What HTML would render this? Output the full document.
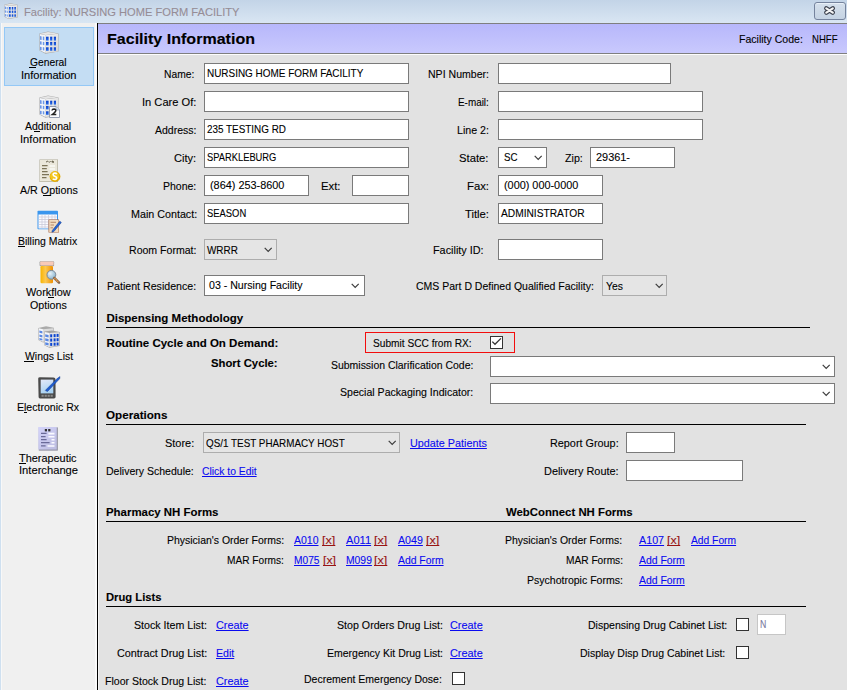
<!DOCTYPE html><html><head><meta charset="utf-8"><style>
html,body{margin:0;padding:0;}
body{width:847px;height:690px;overflow:hidden;position:relative;background:#e2e2e2;font-family:"Liberation Sans",sans-serif;}
body div,body span,body svg{position:absolute;}
.t{white-space:nowrap;transform-origin:0 0;text-decoration-skip-ink:none;-webkit-text-stroke:0.1px currentColor;}
</style></head><body>

<div style="left:0px;top:0px;width:847px;height:23px;background:linear-gradient(#c3d4e7,#d9e6f3)"></div>
<svg style="left:4px;top:3px" width="14.0" height="16.099999999999998" viewBox="0 0 20 23">
<defs><linearGradient id="bw" x1="0" y1="0" x2="0" y2="1"><stop offset="0" stop-color="#0a3ec8"/><stop offset="1" stop-color="#2a6ee8"/></linearGradient>
<linearGradient id="bf" x1="0" y1="0" x2="1" y2="1"><stop offset="0" stop-color="#f6f6f6"/><stop offset="1" stop-color="#d4d4d4"/></linearGradient></defs>
<path d="M0.4 2.6 L9 0.4 L19.5 2.4 L19.5 20.6 L6.5 22.7 L0.4 19.6 Z" fill="#a8a8a8"/>
<path d="M0.9 3 L6.5 4.2 L6.5 22 L0.9 19.3 Z" fill="#f4f6fa"/>
<path d="M6.5 4.2 L19 2.8 L19 20.4 L6.5 22 Z" fill="url(#bf)"/>
<path d="M1 2.7 L9 0.9 L18.8 2.6 L6.5 3.9 Z" fill="#e6e6e6"/>
<path d="M1.2 5.1000000000000005 L2.5 5.4 L2.5 9.0 L1.2 8.7 Z" fill="#4a7ee0"/><path d="M3.8 5.5 L5.3 5.8 L5.3 9.4 L3.8 9.1 Z" fill="#6a98e8"/><path d="M1.2 10.3 L2.5 10.6 L2.5 13.8 L1.2 13.5 Z" fill="#4a7ee0"/><path d="M3.8 10.700000000000001 L5.3 11.0 L5.3 14.200000000000001 L3.8 13.9 Z" fill="#6a98e8"/><path d="M1.2 15.700000000000001 L2.5 16.0 L2.5 19.2 L1.2 18.900000000000002 Z" fill="#4a7ee0"/><path d="M3.8 16.1 L5.3 16.400000000000002 L5.3 19.6 L3.8 19.3 Z" fill="#6a98e8"/><rect x="7" y="5.7" width="2.6" height="3.9" fill="url(#bw)"/><rect x="11.1" y="5.7" width="2.2" height="3.9" fill="url(#bw)"/><rect x="14.8" y="5.7" width="2.2" height="3.9" fill="url(#bw)"/><rect x="7" y="10.9" width="2.6" height="3.5" fill="url(#bw)"/><rect x="11.1" y="10.9" width="2.2" height="3.5" fill="url(#bw)"/><rect x="14.8" y="10.9" width="2.2" height="3.5" fill="url(#bw)"/><rect x="7" y="16.3" width="2.6" height="3.5" fill="url(#bw)"/><rect x="11.1" y="16.3" width="2.2" height="3.5" fill="url(#bw)"/><rect x="14.8" y="16.3" width="2.2" height="3.5" fill="url(#bw)"/>
</svg>
<span class="t" style="left:23.5px;top:2px;font-size:11.5px;line-height:20px;color:#968d96;transform:scaleX(0.9664);">Facility: NURSING HOME FORM FACILITY</span>
<div style="left:814px;top:2px;width:30px;height:16px;border:1px solid #75839d;border-radius:3px;background:linear-gradient(#d5e0ec,#c5d3e3);box-shadow:inset 0 1px 0 #e8f0f8"></div>
<svg style="left:818px;top:2px" width="24" height="18" viewBox="0 0 24 18">
<path d="M8.3 6.3 L14.8 10.6 M14.8 6.3 L8.3 10.6" stroke="#3a3f4c" stroke-width="4.4" stroke-linecap="round"/>
<path d="M8.3 6.3 L14.8 10.6 M14.8 6.3 L8.3 10.6" stroke="#f4f4f4" stroke-width="2.2" stroke-linecap="round"/>
</svg>
<div style="left:0px;top:23px;width:97px;height:667px;background:#f0f0f0"></div>
<div style="left:0px;top:23px;width:1px;height:667px;background:#cfe0f0"></div>
<div style="left:1px;top:23px;width:1px;height:667px;background:#f8f8f8"></div>
<div style="left:95px;top:23px;width:2px;height:667px;background:#fafafa"></div>
<div style="left:97px;top:23px;width:1px;height:667px;background:#000"></div>
<div style="left:98px;top:55px;width:1px;height:635px;background:#f4f4f4"></div>
<div style="left:4px;top:27px;width:88px;height:57px;border:1px solid #94c8f6;background:#c4ddf3"></div>
<svg style="left:39px;top:31px" width="20.0" height="23.0" viewBox="0 0 20 23">
<defs><linearGradient id="bw" x1="0" y1="0" x2="0" y2="1"><stop offset="0" stop-color="#0a3ec8"/><stop offset="1" stop-color="#2a6ee8"/></linearGradient>
<linearGradient id="bf" x1="0" y1="0" x2="1" y2="1"><stop offset="0" stop-color="#f6f6f6"/><stop offset="1" stop-color="#d4d4d4"/></linearGradient></defs>
<path d="M0.4 2.6 L9 0.4 L19.5 2.4 L19.5 20.6 L6.5 22.7 L0.4 19.6 Z" fill="#a8a8a8"/>
<path d="M0.9 3 L6.5 4.2 L6.5 22 L0.9 19.3 Z" fill="#f4f6fa"/>
<path d="M6.5 4.2 L19 2.8 L19 20.4 L6.5 22 Z" fill="url(#bf)"/>
<path d="M1 2.7 L9 0.9 L18.8 2.6 L6.5 3.9 Z" fill="#e6e6e6"/>
<path d="M1.2 5.1000000000000005 L2.5 5.4 L2.5 9.0 L1.2 8.7 Z" fill="#4a7ee0"/><path d="M3.8 5.5 L5.3 5.8 L5.3 9.4 L3.8 9.1 Z" fill="#6a98e8"/><path d="M1.2 10.3 L2.5 10.6 L2.5 13.8 L1.2 13.5 Z" fill="#4a7ee0"/><path d="M3.8 10.700000000000001 L5.3 11.0 L5.3 14.200000000000001 L3.8 13.9 Z" fill="#6a98e8"/><path d="M1.2 15.700000000000001 L2.5 16.0 L2.5 19.2 L1.2 18.900000000000002 Z" fill="#4a7ee0"/><path d="M3.8 16.1 L5.3 16.400000000000002 L5.3 19.6 L3.8 19.3 Z" fill="#6a98e8"/><rect x="7" y="5.7" width="2.6" height="3.9" fill="url(#bw)"/><rect x="11.1" y="5.7" width="2.2" height="3.9" fill="url(#bw)"/><rect x="14.8" y="5.7" width="2.2" height="3.9" fill="url(#bw)"/><rect x="7" y="10.9" width="2.6" height="3.5" fill="url(#bw)"/><rect x="11.1" y="10.9" width="2.2" height="3.5" fill="url(#bw)"/><rect x="14.8" y="10.9" width="2.2" height="3.5" fill="url(#bw)"/><rect x="7" y="16.3" width="2.6" height="3.5" fill="url(#bw)"/><rect x="11.1" y="16.3" width="2.2" height="3.5" fill="url(#bw)"/><rect x="14.8" y="16.3" width="2.2" height="3.5" fill="url(#bw)"/>
</svg><svg style="left:39px;top:95px" width="20.0" height="23.0" viewBox="0 0 20 23">
<defs><linearGradient id="bw" x1="0" y1="0" x2="0" y2="1"><stop offset="0" stop-color="#0a3ec8"/><stop offset="1" stop-color="#2a6ee8"/></linearGradient>
<linearGradient id="bf" x1="0" y1="0" x2="1" y2="1"><stop offset="0" stop-color="#f6f6f6"/><stop offset="1" stop-color="#d4d4d4"/></linearGradient></defs>
<path d="M0.4 2.6 L9 0.4 L19.5 2.4 L19.5 20.6 L6.5 22.7 L0.4 19.6 Z" fill="#a8a8a8"/>
<path d="M0.9 3 L6.5 4.2 L6.5 22 L0.9 19.3 Z" fill="#f4f6fa"/>
<path d="M6.5 4.2 L19 2.8 L19 20.4 L6.5 22 Z" fill="url(#bf)"/>
<path d="M1 2.7 L9 0.9 L18.8 2.6 L6.5 3.9 Z" fill="#e6e6e6"/>
<path d="M1.2 5.1000000000000005 L2.5 5.4 L2.5 9.0 L1.2 8.7 Z" fill="#4a7ee0"/><path d="M3.8 5.5 L5.3 5.8 L5.3 9.4 L3.8 9.1 Z" fill="#6a98e8"/><path d="M1.2 10.3 L2.5 10.6 L2.5 13.8 L1.2 13.5 Z" fill="#4a7ee0"/><path d="M3.8 10.700000000000001 L5.3 11.0 L5.3 14.200000000000001 L3.8 13.9 Z" fill="#6a98e8"/><path d="M1.2 15.700000000000001 L2.5 16.0 L2.5 19.2 L1.2 18.900000000000002 Z" fill="#4a7ee0"/><path d="M3.8 16.1 L5.3 16.400000000000002 L5.3 19.6 L3.8 19.3 Z" fill="#6a98e8"/><rect x="7" y="5.7" width="2.6" height="3.9" fill="url(#bw)"/><rect x="11.1" y="5.7" width="2.2" height="3.9" fill="url(#bw)"/><rect x="14.8" y="5.7" width="2.2" height="3.9" fill="url(#bw)"/><rect x="7" y="10.9" width="2.6" height="3.5" fill="url(#bw)"/><rect x="11.1" y="10.9" width="2.2" height="3.5" fill="url(#bw)"/><rect x="14.8" y="10.9" width="2.2" height="3.5" fill="url(#bw)"/><rect x="7" y="16.3" width="2.6" height="3.5" fill="url(#bw)"/><rect x="11.1" y="16.3" width="2.2" height="3.5" fill="url(#bw)"/><rect x="14.8" y="16.3" width="2.2" height="3.5" fill="url(#bw)"/>
</svg><svg style="left:49px;top:106px" width="11" height="12" viewBox="0 0 11 12">
<path d="M0.5 0.5 L7 0.5 L10.5 4 L10.5 11.5 L0.5 11.5 Z" fill="#fbfcff" stroke="#8a94a8" stroke-width="0.9"/>
<path d="M7 0.5 L7 4 L10.5 4" fill="#d8e4f4" stroke="#8a94a8" stroke-width="0.6"/>
<path d="M3 4.5 Q3.2 3 5 3 Q7 3.1 6.8 4.8 Q6.5 6 4.5 7.5 L3.2 8.6 L7.3 8.6" fill="none" stroke="#222" stroke-width="1.5"/>
</svg><svg style="left:39px;top:159px" width="22" height="24" viewBox="0 0 22 24">
<rect x="0.5" y="0.5" width="18.5" height="22.5" fill="#a9a591"/>
<rect x="0.9" y="0.9" width="17.5" height="21.5" fill="#ebe8db"/>
<path d="M7 3.2 L8.5 2 L9.5 3.2 M10.5 3.5 L11.5 2 M13 3.2 L13 2 L14.5 2.5 L13.5 3.2 L14.8 3.5" fill="none" stroke="#55503a" stroke-width="0.9"/>
<path d="M3 6.7 H8.6 M3 9.7 H7.8 M3 12.7 H8.6 M3 15.7 H10 M3 18.7 H7.5" stroke="#7c7458" stroke-width="1.3"/>
<path d="M10.5 6.9 H16 M10.5 9.9 H16" stroke="#fafaf6" stroke-width="1.5"/>
<circle cx="16" cy="17.5" r="5.4" fill="#e4ac00"/>
<circle cx="15.6" cy="17" r="4.4" fill="#f4c820"/>
<path d="M18 14.8 Q16.5 13.8 15 14.3 Q13.5 15 14.6 16.6 L17 17.9 Q18.2 19 17 20.2 Q15.5 21 13.8 19.9" fill="none" stroke="#fff" stroke-width="1.6"/>
</svg><svg style="left:37px;top:210px" width="25" height="24" viewBox="0 0 25 24">
<rect x="0.5" y="0.8" width="20.5" height="18.5" rx="0.8" fill="#3a96ee"/>
<rect x="1.5" y="4.5" width="18.5" height="14" fill="#fbfbff"/>
<path d="M1.5 7 H20 M1.5 9.5 H20 M1.5 12 H20 M1.5 14.5 H20 M1.5 17 H20" stroke="#c4c4d4" stroke-width="0.7"/>
<path d="M5 4.5 V18.5 M8 4.5 V18.5 M11.5 4.5 V18.5 M15 4.5 V18.5 M18 4.5 V18.5" stroke="#c8c8d8" stroke-width="0.7"/>
<rect x="11.5" y="9.5" width="10.5" height="13" fill="#a86a48"/>
<rect x="12.2" y="10" width="9.3" height="12" fill="#f2dcc0"/>
<path d="M13.5 12.3 H19 M13.5 15 H17 M13.5 17.8 H16" stroke="#b08060" stroke-width="0.9"/>
<path d="M15.3 20.5 L22.8 11.2 L24.3 12.5 L16.8 21.6 L14.9 22.2 Z" fill="#2566d8" stroke="#123c90" stroke-width="0.6"/>
</svg><svg style="left:39px;top:260px" width="22" height="25" viewBox="0 0 22 25">
<defs><linearGradient id="bo" x1="0" y1="0" x2="1" y2="0"><stop offset="0" stop-color="#f8b400"/><stop offset="0.4" stop-color="#fcc850"/><stop offset="1" stop-color="#f09000"/></linearGradient>
<radialGradient id="lg" cx="0.35" cy="0.35" r="0.7"><stop offset="0" stop-color="#e8f2f8"/><stop offset="1" stop-color="#88b4d0"/></radialGradient></defs>
<rect x="0.6" y="1.2" width="14.5" height="5" rx="1" fill="#9a9a9a"/>
<rect x="1.2" y="1.4" width="13.4" height="4.2" rx="0.8" fill="#f8cab8"/>
<rect x="1.5" y="6" width="12.5" height="17.3" rx="1.2" fill="url(#bo)"/>
<circle cx="12.4" cy="14.8" r="4.4" fill="url(#lg)" stroke="#7a8898" stroke-width="1"/>
<path d="M15.3 18 L20 22.6" stroke="#8a6a50" stroke-width="2.6" stroke-linecap="round"/>
<path d="M15.5 18.2 L19.8 22.4" stroke="#f4a040" stroke-width="1.4" stroke-dasharray="1.2 0.8"/>
</svg><svg style="left:38px;top:326px" width="22" height="22" viewBox="0 0 22 22">
<path d="M0.3 2 L8 0.3 L15.8 1.8 L15.8 14.5 L5 16.5 L0.3 14 Z" fill="#aaaaaa"/>
<path d="M0.8 2.3 L5 3.3 L5 15.8 L0.8 13.7 Z" fill="#f4f6fa"/>
<path d="M5 3.3 L15.3 2.2 L15.3 14.2 L5 15.8 Z" fill="#dcdcdc"/>
<path d="M1.4 4.5 L4.4 5.2 L4.4 7.5 L1.4 6.8 Z M1.4 8.5 L4.4 9.2 L4.4 11.5 L1.4 10.8 Z M1.4 12 L4.4 12.7 L4.4 14.5 L1.4 13.8 Z" fill="#5a88e2"/>
<path d="M6.2 5.6 L14 4.4 L21.8 6 L21.8 20 L11.3 21.8 L6.2 19.3 Z" fill="#a4a4a4"/>
<path d="M6.7 5.9 L11.3 7 L11.3 21.1 L6.7 18.9 Z" fill="#f4f6fa"/>
<path d="M11.3 7 L21.3 6.2 L21.3 19.7 L11.3 21.1 Z" fill="#e4e4e4"/>
<path d="M7.2 8.2 L10.6 9 L10.6 11.5 L7.2 10.7 Z M7.2 12.3 L10.6 13.1 L10.6 15.6 L7.2 14.8 Z M7.2 16.3 L10.6 17.1 L10.6 19.5 L7.2 18.7 Z" fill="#5a88e2"/>
<rect x="12.2" y="8.3" width="2" height="3" fill="#0a44d0"/><rect x="15.6" y="8.1" width="2" height="3" fill="#0a44d0"/><rect x="18.6" y="7.9" width="2" height="3" fill="#0a44d0"/>
<rect x="12.2" y="12.6" width="2" height="3" fill="#0a44d0"/><rect x="15.6" y="12.4" width="2" height="3" fill="#0a44d0"/><rect x="18.6" y="12.2" width="2" height="3" fill="#0a44d0"/>
<rect x="12.2" y="16.9" width="2" height="3" fill="#0a44d0"/><rect x="15.6" y="16.7" width="2" height="3" fill="#0a44d0"/><rect x="18.6" y="16.5" width="2" height="3" fill="#0a44d0"/>
</svg><svg style="left:37px;top:376px" width="24" height="23" viewBox="0 0 24 23">
<defs><linearGradient id="sc" x1="0" y1="0" x2="0.3" y2="1"><stop offset="0" stop-color="#e4e8f8"/><stop offset="1" stop-color="#a8d2f2"/></linearGradient></defs>
<path d="M1.2 2.5 Q1.2 1.2 3 1.2 L16.5 1.5 Q18.5 1.6 18.5 3.5 L18.6 21 Q18.6 22.4 17 22.4 L3 22.4 Q1.6 22.4 1.6 21 Z" fill="#4a4a4a"/>
<rect x="3.7" y="3.6" width="12.6" height="13.8" fill="url(#sc)"/>
<rect x="4.5" y="18.8" width="2.2" height="2" fill="#8a8a8a"/><rect x="7.6" y="18.8" width="2.2" height="2" fill="#8a8a8a"/><rect x="10.6" y="18.8" width="2.2" height="2" fill="#8a8a8a"/><rect x="13.6" y="18.8" width="2.2" height="2" fill="#8a8a8a"/>
<path d="M8.2 14.5 L20.5 2.2 L23 0.6 L22.6 2.8 L10.5 15.5 Z" fill="#1f5cd0" stroke="#103a90" stroke-width="0.5"/>
<path d="M8.2 14.5 L7.8 15.6 L9 15.3 Z" fill="#ccc"/>
</svg><svg style="left:38px;top:427px" width="20" height="24" viewBox="0 0 20 24">
<defs><linearGradient id="td" x1="0" y1="0" x2="1" y2="1"><stop offset="0" stop-color="#d4d4fa"/><stop offset="1" stop-color="#bcbce0"/></linearGradient></defs>
<rect x="0.8" y="0.4" width="19" height="23.2" fill="#8a8a9a"/>
<rect x="0.3" y="0" width="18.5" height="22.6" fill="url(#td)"/>
<rect x="6.8" y="2" width="2.2" height="2.4" fill="#333"/><rect x="10.2" y="2" width="2.2" height="2.4" fill="#333"/>
<path d="M3 6.4 H8.6 M3 9.6 H7.6 M3 12.6 H8.6 M3 15.6 H11.6 M3 18.8 H7.6" stroke="#6a6a98" stroke-width="1.3"/>
<path d="M10.4 6.6 H16.5 M10.4 9.8 H16.5 M13.5 12.8 H16.5 M13.5 15.8 H16.5 M9.5 19 H16.5" stroke="#fafaff" stroke-width="1.6"/>
</svg>
<span class="t" style="left:29.5px;top:52px;font-size:11px;line-height:20px;color:#000;transform:scaleX(0.9347);">General</span>
<div style="left:29px;top:67px;width:7px;height:1px;background:#000"></div>
<span class="t" style="left:20.7px;top:65px;font-size:11px;line-height:20px;color:#000;transform:scaleX(1.0079);">Information</span>
<span class="t" style="left:25.2px;top:116px;font-size:11px;line-height:20px;color:#000;transform:scaleX(0.9557);">Additional</span>
<div style="left:34px;top:131px;width:6px;height:1px;background:#000"></div>
<span class="t" style="left:20.3px;top:129px;font-size:11px;line-height:20px;color:#000;transform:scaleX(1.0170);">Information</span>
<span class="t" style="left:19.8px;top:180px;font-size:11px;line-height:20px;color:#000;transform:scaleX(0.9740);">A/R Options</span>
<div style="left:43px;top:195px;width:8px;height:1px;background:#000"></div>
<span class="t" style="left:18.3px;top:231px;font-size:11px;line-height:20px;color:#000;transform:scaleX(0.9480);">Billing Matrix</span>
<div style="left:18px;top:246px;width:7px;height:1px;background:#000"></div>
<span class="t" style="left:25.7px;top:282px;font-size:11px;line-height:20px;color:#000;transform:scaleX(0.9930);">Workflow</span>
<div style="left:48px;top:297px;width:6px;height:1px;background:#000"></div>
<span class="t" style="left:29.6px;top:295px;font-size:11px;line-height:20px;color:#000;transform:scaleX(0.9700);">Options</span>
<span class="t" style="left:24.6px;top:346px;font-size:11px;line-height:20px;color:#000;transform:scaleX(0.9478);">Wings List</span>
<div style="left:24px;top:361px;width:10px;height:1px;background:#000"></div>
<span class="t" style="left:17.2px;top:397px;font-size:11px;line-height:20px;color:#000;transform:scaleX(0.9581);">Electronic Rx</span>
<div style="left:24px;top:412px;width:3px;height:1px;background:#000"></div>
<span class="t" style="left:19.2px;top:448px;font-size:11px;line-height:20px;color:#000;transform:scaleX(0.9910);">Therapeutic</span>
<div style="left:19px;top:463px;width:7px;height:1px;background:#000"></div>
<span class="t" style="left:18.5px;top:460px;font-size:11px;line-height:20px;color:#000;transform:scaleX(1.0162);">Interchange</span>
<div style="left:98px;top:23px;width:749px;height:1px;background:#7f7f7f"></div>
<div style="left:98px;top:24px;width:749px;height:29px;background:linear-gradient(#b7b7fb,#c9c9fd)"></div>
<div style="left:98px;top:53px;width:749px;height:1px;background:#7f7f7f"></div>
<div style="left:98px;top:54px;width:749px;height:1px;background:#fdfdfd"></div>
<span class="t" style="left:106.6px;top:29px;font-size:15px;line-height:20px;color:#000;font-weight:bold;transform:scaleX(1.0696);">Facility Information</span>
<span class="t" style="left:738.6px;top:29px;font-size:11px;line-height:20px;color:#000;transform:scaleX(0.9586);">Facility Code:</span>
<span class="t" style="left:811.5px;top:29px;font-size:11px;line-height:20px;color:#000;transform:scaleX(0.8699);">NHFF</span>
<span class="t" style="left:163.7px;top:64px;font-size:11px;line-height:20px;color:#000;transform:scaleX(0.9350);">Name:</span>
<span class="t" style="left:141.6px;top:92px;font-size:11px;line-height:20px;color:#000;transform:scaleX(1.0103);">In Care Of:</span>
<span class="t" style="left:155.3px;top:120px;font-size:11px;line-height:20px;color:#000;transform:scaleX(0.9531);">Address:</span>
<span class="t" style="left:174.3px;top:148px;font-size:11px;line-height:20px;color:#000;transform:scaleX(1.0091);">City:</span>
<span class="t" style="left:163.2px;top:176px;font-size:11px;line-height:20px;color:#000;transform:scaleX(0.9540);">Phone:</span>
<span class="t" style="left:130.5px;top:204px;font-size:11px;line-height:20px;color:#000;transform:scaleX(0.9749);">Main Contact:</span>
<div style="left:204px;top:63px;width:203px;height:19px;border:1px solid #7a7a7a;background:#fff"></div>
<div style="left:204px;top:91px;width:203px;height:19px;border:1px solid #7a7a7a;background:#fff"></div>
<div style="left:204px;top:119px;width:203px;height:19px;border:1px solid #7a7a7a;background:#fff"></div>
<div style="left:204px;top:147px;width:203px;height:19px;border:1px solid #7a7a7a;background:#fff"></div>
<div style="left:204px;top:175px;width:103px;height:19px;border:1px solid #7a7a7a;background:#fff"></div>
<div style="left:352px;top:175px;width:55px;height:19px;border:1px solid #7a7a7a;background:#fff"></div>
<div style="left:204px;top:203px;width:203px;height:19px;border:1px solid #7a7a7a;background:#fff"></div>
<span class="t" style="left:206.7px;top:63px;font-size:11px;line-height:20px;color:#000;transform:scaleX(0.9035);">NURSING HOME FORM FACILITY</span>
<span class="t" style="left:207.0px;top:119px;font-size:11px;line-height:20px;color:#000;transform:scaleX(0.8992);">235 TESTING RD</span>
<span class="t" style="left:206.6px;top:147px;font-size:11px;line-height:20px;color:#000;transform:scaleX(0.8489);">SPARKLEBURG</span>
<span class="t" style="left:209.6px;top:175px;font-size:11px;line-height:20px;color:#000;transform:scaleX(0.9883);">(864) 253-8600</span>
<span class="t" style="left:321.2px;top:176px;font-size:11px;line-height:20px;color:#000;transform:scaleX(1.0227);">Ext:</span>
<span class="t" style="left:206.6px;top:203px;font-size:11px;line-height:20px;color:#000;transform:scaleX(0.8545);">SEASON</span>
<span class="t" style="left:428.0px;top:64px;font-size:11px;line-height:20px;color:#000;transform:scaleX(0.9592);">NPI Number:</span>
<span class="t" style="left:458.2px;top:92px;font-size:11px;line-height:20px;color:#000;transform:scaleX(0.9001);">E-mail:</span>
<span class="t" style="left:457.0px;top:120px;font-size:11px;line-height:20px;color:#000;transform:scaleX(0.9679);">Line 2:</span>
<span class="t" style="left:459.2px;top:148px;font-size:11px;line-height:20px;color:#000;transform:scaleX(1.0250);">State:</span>
<span class="t" style="left:565.4px;top:148px;font-size:11px;line-height:20px;color:#000;transform:scaleX(0.9704);">Zip:</span>
<span class="t" style="left:467.0px;top:176px;font-size:11px;line-height:20px;color:#000;transform:scaleX(1.0277);">Fax:</span>
<span class="t" style="left:465.0px;top:204px;font-size:11px;line-height:20px;color:#000;transform:scaleX(1.0240);">Title:</span>
<div style="left:498px;top:63px;width:171px;height:19px;border:1px solid #7a7a7a;background:#fff"></div>
<div style="left:498px;top:91px;width:203px;height:19px;border:1px solid #7a7a7a;background:#fff"></div>
<div style="left:498px;top:119px;width:203px;height:19px;border:1px solid #7a7a7a;background:#fff"></div>
<div style="left:498px;top:147px;width:47px;height:19px;border:1px solid #7a7a7a;background:#fff"></div>
<svg style="left:534px;top:155px" width="10" height="6" viewBox="0 0 10 6"><path d="M0.7 0.9 L4.2 4.4 L7.7 0.9" fill="none" stroke="#3c3c3c" stroke-width="1.2"/></svg>
<span class="t" style="left:503.5px;top:147px;font-size:11px;line-height:20px;color:#000;transform:scaleX(0.8834);">SC</span>
<div style="left:590px;top:147px;width:83px;height:19px;border:1px solid #7a7a7a;background:#fff"></div>
<span class="t" style="left:596.4px;top:147px;font-size:11px;line-height:20px;color:#000;transform:scaleX(0.9918);">29361-</span>
<div style="left:498px;top:175px;width:103px;height:19px;border:1px solid #7a7a7a;background:#fff"></div>
<span class="t" style="left:503.5px;top:175px;font-size:11px;line-height:20px;color:#000;transform:scaleX(0.9870);">(000) 000-0000</span>
<div style="left:498px;top:203px;width:103px;height:19px;border:1px solid #7a7a7a;background:#fff"></div>
<span class="t" style="left:500.5px;top:203px;font-size:11px;line-height:20px;color:#000;transform:scaleX(0.9273);">ADMINISTRATOR</span>
<span class="t" style="left:129.0px;top:240px;font-size:11px;line-height:20px;color:#000;transform:scaleX(0.9600);">Room Format:</span>
<div style="left:204px;top:239px;width:71px;height:19px;border:1px solid #adadad;background:#e5e5e5"></div>
<svg style="left:264px;top:247px" width="10" height="6" viewBox="0 0 10 6"><path d="M0.7 0.9 L4.2 4.4 L7.7 0.9" fill="none" stroke="#3c3c3c" stroke-width="1.2"/></svg>
<span class="t" style="left:207.4px;top:240px;font-size:11px;line-height:20px;color:#000;transform:scaleX(0.9009);">WRRR</span>
<span class="t" style="left:433.2px;top:240px;font-size:11px;line-height:20px;color:#000;transform:scaleX(0.9855);">Facility ID:</span>
<div style="left:498px;top:239px;width:103px;height:19px;border:1px solid #7a7a7a;background:#fff"></div>
<span class="t" style="left:107.3px;top:276px;font-size:11px;line-height:20px;color:#000;transform:scaleX(0.9653);">Patient Residence:</span>
<div style="left:204px;top:275px;width:159px;height:19px;border:1px solid #7a7a7a;background:#fff"></div>
<svg style="left:351px;top:283px" width="10" height="6" viewBox="0 0 10 6"><path d="M0.7 0.9 L4.2 4.4 L7.7 0.9" fill="none" stroke="#3c3c3c" stroke-width="1.2"/></svg>
<span class="t" style="left:209.0px;top:275px;font-size:11px;line-height:20px;color:#000;transform:scaleX(0.9628);">03 - Nursing Facility</span>
<span class="t" style="left:415.5px;top:276px;font-size:11px;line-height:20px;color:#000;transform:scaleX(0.9537);">CMS Part D Defined Qualified Facility:</span>
<div style="left:602px;top:275px;width:63px;height:19px;border:1px solid #adadad;background:#e5e5e5"></div>
<svg style="left:655px;top:283px" width="10" height="6" viewBox="0 0 10 6"><path d="M0.7 0.9 L4.2 4.4 L7.7 0.9" fill="none" stroke="#3c3c3c" stroke-width="1.2"/></svg>
<span class="t" style="left:605.7px;top:276px;font-size:11px;line-height:20px;color:#000;transform:scaleX(0.9413);">Yes</span>
<span class="t" style="left:106.4px;top:308px;font-size:11.5px;line-height:20px;color:#000;font-weight:bold;">Dispensing Methodology</span>
<div style="left:106px;top:327px;width:704px;height:1px;background:#000"></div>
<span class="t" style="left:106.4px;top:333px;font-size:11.5px;line-height:20px;color:#000;font-weight:bold;">Routine Cycle and On Demand:</span>
<span class="t" style="left:211.0px;top:353px;font-size:11.5px;line-height:20px;color:#000;font-weight:bold;transform:scaleX(0.9835);">Short Cycle:</span>
<div style="left:365px;top:332px;width:148px;height:19px;border:1px solid #f20d0d"></div>
<span class="t" style="left:372.7px;top:333px;font-size:11px;line-height:20px;color:#000;transform:scaleX(0.9224);">Submit SCC from RX:</span>
<div style="left:490px;top:336px;width:11px;height:11px;border:1px solid #333;background:#fff"></div>
<svg style="left:490px;top:336px" width="13" height="13" viewBox="0 0 13 13"><path d="M2.3 5.6 L5 8.3 L10.9 2.4" fill="none" stroke="#333" stroke-width="1.3"/></svg>
<span class="t" style="left:331.4px;top:355px;font-size:11px;line-height:20px;color:#000;transform:scaleX(0.9503);">Submission Clarification Code:</span>
<div style="left:490px;top:356px;width:343px;height:19px;border:1px solid #7a7a7a;background:#fff"></div>
<svg style="left:822px;top:364px" width="10" height="6" viewBox="0 0 10 6"><path d="M0.7 0.9 L4.2 4.4 L7.7 0.9" fill="none" stroke="#3c3c3c" stroke-width="1.2"/></svg>
<span class="t" style="left:340.4px;top:382px;font-size:11px;line-height:20px;color:#000;transform:scaleX(0.9604);">Special Packaging Indicator:</span>
<div style="left:490px;top:383px;width:343px;height:19px;border:1px solid #7a7a7a;background:#fff"></div>
<svg style="left:822px;top:391px" width="10" height="6" viewBox="0 0 10 6"><path d="M0.7 0.9 L4.2 4.4 L7.7 0.9" fill="none" stroke="#3c3c3c" stroke-width="1.2"/></svg>
<span class="t" style="left:106.4px;top:405px;font-size:11.5px;line-height:20px;color:#000;font-weight:bold;transform:scaleX(1.0117);">Operations</span>
<div style="left:106px;top:424px;width:700px;height:1px;background:#000"></div>
<span class="t" style="left:164.5px;top:433px;font-size:11px;line-height:20px;color:#000;transform:scaleX(0.9940);">Store:</span>
<div style="left:203px;top:432px;width:195px;height:19px;border:1px solid #adadad;background:#e5e5e5"></div>
<svg style="left:388px;top:440px" width="10" height="6" viewBox="0 0 10 6"><path d="M0.7 0.9 L4.2 4.4 L7.7 0.9" fill="none" stroke="#3c3c3c" stroke-width="1.2"/></svg>
<span class="t" style="left:206.3px;top:433px;font-size:11px;line-height:20px;color:#000;transform:scaleX(0.8966);">QS/1 TEST PHARMACY HOST</span>
<span class="t" style="left:409.7px;top:433px;font-size:11px;line-height:20px;color:#0a0af0;transform:scaleX(0.9816);text-decoration:underline;">Update Patients</span>
<span class="t" style="left:549.5px;top:433px;font-size:11px;line-height:20px;color:#000;transform:scaleX(0.9849);">Report Group:</span>
<div style="left:626px;top:432px;width:47px;height:19px;border:1px solid #7a7a7a;background:#fff"></div>
<span class="t" style="left:105.9px;top:461px;font-size:11px;line-height:20px;color:#000;transform:scaleX(0.9569);">Delivery Schedule:</span>
<span class="t" style="left:202.0px;top:461px;font-size:11px;line-height:20px;color:#0a0af0;transform:scaleX(0.9399);text-decoration:underline;">Click to Edit</span>
<span class="t" style="left:543.6px;top:461px;font-size:11px;line-height:20px;color:#000;transform:scaleX(0.9918);">Delivery Route:</span>
<div style="left:626px;top:460px;width:115px;height:19px;border:1px solid #7a7a7a;background:#fff"></div>
<span class="t" style="left:106.4px;top:502px;font-size:11.5px;line-height:20px;color:#000;font-weight:bold;transform:scaleX(0.9939);">Pharmacy NH Forms</span>
<span class="t" style="left:506.3px;top:502px;font-size:11.5px;line-height:20px;color:#000;font-weight:bold;transform:scaleX(0.9880);">WebConnect NH Forms</span>
<div style="left:106px;top:521px;width:700px;height:1px;background:#000"></div>
<span class="t" style="left:166.6px;top:530px;font-size:11px;line-height:20px;color:#000;transform:scaleX(0.9508);">Physician's Order Forms:</span>
<span class="t" style="left:226.8px;top:550px;font-size:11px;line-height:20px;color:#000;transform:scaleX(0.9219);">MAR Forms:</span>
<span class="t" style="left:294.0px;top:530px;font-size:11px;line-height:20px;color:#0a0af0;transform:scaleX(0.9526);text-decoration:underline;">A010</span>
<span class="t" style="left:345.8px;top:530px;font-size:11px;line-height:20px;color:#0a0af0;transform:scaleX(1.0078);text-decoration:underline;">A011</span>
<span class="t" style="left:398.0px;top:530px;font-size:11px;line-height:20px;color:#0a0af0;transform:scaleX(0.9682);text-decoration:underline;">A049</span>
<span class="t" style="left:322.1px;top:530px;font-size:11px;line-height:20px;color:#981414;transform:scaleX(1.1441);text-decoration:underline;">[x]</span>
<span class="t" style="left:373.9px;top:530px;font-size:11px;line-height:20px;color:#981414;transform:scaleX(1.1441);text-decoration:underline;">[x]</span>
<span class="t" style="left:426.1px;top:530px;font-size:11px;line-height:20px;color:#981414;transform:scaleX(1.1441);text-decoration:underline;">[x]</span>
<span class="t" style="left:294.0px;top:550px;font-size:11px;line-height:20px;color:#0a0af0;transform:scaleX(0.9262);text-decoration:underline;">M075</span>
<span class="t" style="left:322.5px;top:550px;font-size:11px;line-height:20px;color:#981414;transform:scaleX(1.1183);text-decoration:underline;">[x]</span>
<span class="t" style="left:345.8px;top:550px;font-size:11px;line-height:20px;color:#0a0af0;transform:scaleX(0.9407);text-decoration:underline;">M099</span>
<span class="t" style="left:374.0px;top:550px;font-size:11px;line-height:20px;color:#981414;transform:scaleX(1.1441);text-decoration:underline;">[x]</span>
<span class="t" style="left:398.0px;top:550px;font-size:11px;line-height:20px;color:#0a0af0;transform:scaleX(0.9439);text-decoration:underline;">Add Form</span>
<span class="t" style="left:505.3px;top:530px;font-size:11px;line-height:20px;color:#000;transform:scaleX(0.9516);">Physician's Order Forms:</span>
<span class="t" style="left:638.7px;top:530px;font-size:11px;line-height:20px;color:#0a0af0;transform:scaleX(0.9759);text-decoration:underline;">A107</span>
<span class="t" style="left:667.4px;top:530px;font-size:11px;line-height:20px;color:#981414;transform:scaleX(1.1355);text-decoration:underline;">[x]</span>
<span class="t" style="left:691.0px;top:530px;font-size:11px;line-height:20px;color:#0a0af0;transform:scaleX(0.9335);text-decoration:underline;">Add Form</span>
<span class="t" style="left:565.5px;top:550px;font-size:11px;line-height:20px;color:#000;transform:scaleX(0.9235);">MAR Forms:</span>
<span class="t" style="left:638.7px;top:550px;font-size:11px;line-height:20px;color:#0a0af0;transform:scaleX(0.9480);text-decoration:underline;">Add Form</span>
<span class="t" style="left:526.6px;top:570px;font-size:11px;line-height:20px;color:#000;transform:scaleX(0.9563);">Psychotropic Forms:</span>
<span class="t" style="left:638.7px;top:570px;font-size:11px;line-height:20px;color:#0a0af0;transform:scaleX(0.9480);text-decoration:underline;">Add Form</span>
<span class="t" style="left:106.4px;top:587px;font-size:11.5px;line-height:20px;color:#000;font-weight:bold;transform:scaleX(0.9761);">Drug Lists</span>
<div style="left:106px;top:606px;width:700px;height:1px;background:#000"></div>
<span class="t" style="left:133.8px;top:615px;font-size:11px;line-height:20px;color:#000;transform:scaleX(0.9688);">Stock Item List:</span>
<span class="t" style="left:215.7px;top:615px;font-size:11px;line-height:20px;color:#0a0af0;transform:scaleX(0.9869);text-decoration:underline;">Create</span>
<span class="t" style="left:116.5px;top:643px;font-size:11px;line-height:20px;color:#000;transform:scaleX(0.9831);">Contract Drug List:</span>
<span class="t" style="left:215.7px;top:643px;font-size:11px;line-height:20px;color:#0a0af0;transform:scaleX(0.9595);text-decoration:underline;">Edit</span>
<span class="t" style="left:105.2px;top:671px;font-size:11px;line-height:20px;color:#000;transform:scaleX(0.9592);">Floor Stock Drug List:</span>
<span class="t" style="left:215.7px;top:671px;font-size:11px;line-height:20px;color:#0a0af0;transform:scaleX(0.9869);text-decoration:underline;">Create</span>
<span class="t" style="left:336.6px;top:615px;font-size:11px;line-height:20px;color:#000;transform:scaleX(0.9680);">Stop Orders Drug List:</span>
<span class="t" style="left:449.9px;top:615px;font-size:11px;line-height:20px;color:#0a0af0;transform:scaleX(0.9900);text-decoration:underline;">Create</span>
<span class="t" style="left:326.5px;top:643px;font-size:11px;line-height:20px;color:#000;transform:scaleX(0.9538);">Emergency Kit Drug List:</span>
<span class="t" style="left:449.9px;top:643px;font-size:11px;line-height:20px;color:#0a0af0;transform:scaleX(0.9900);text-decoration:underline;">Create</span>
<span class="t" style="left:304.0px;top:669px;font-size:11px;line-height:20px;color:#000;transform:scaleX(0.9554);">Decrement Emergency Dose:</span>
<div style="left:452px;top:672px;width:11px;height:11px;border:1px solid #333;background:#fff"></div>
<span class="t" style="left:587.6px;top:615px;font-size:11px;line-height:20px;color:#000;transform:scaleX(0.9568);">Dispensing Drug Cabinet List:</span>
<div style="left:736px;top:618px;width:11px;height:11px;border:1px solid #333;background:#fff"></div>
<div style="left:757px;top:614px;width:27px;height:19px;border:1px solid #c6c6c6;background:#fff"></div>
<span class="t" style="left:759.9px;top:614px;font-size:11px;line-height:20px;color:#7a7aa0;transform:scaleX(0.7937);">N</span>
<span class="t" style="left:579.5px;top:643px;font-size:11px;line-height:20px;color:#000;transform:scaleX(0.9542);">Display Disp Drug Cabinet List:</span>
<div style="left:736px;top:646px;width:11px;height:11px;border:1px solid #333;background:#fff"></div>
</body></html>
